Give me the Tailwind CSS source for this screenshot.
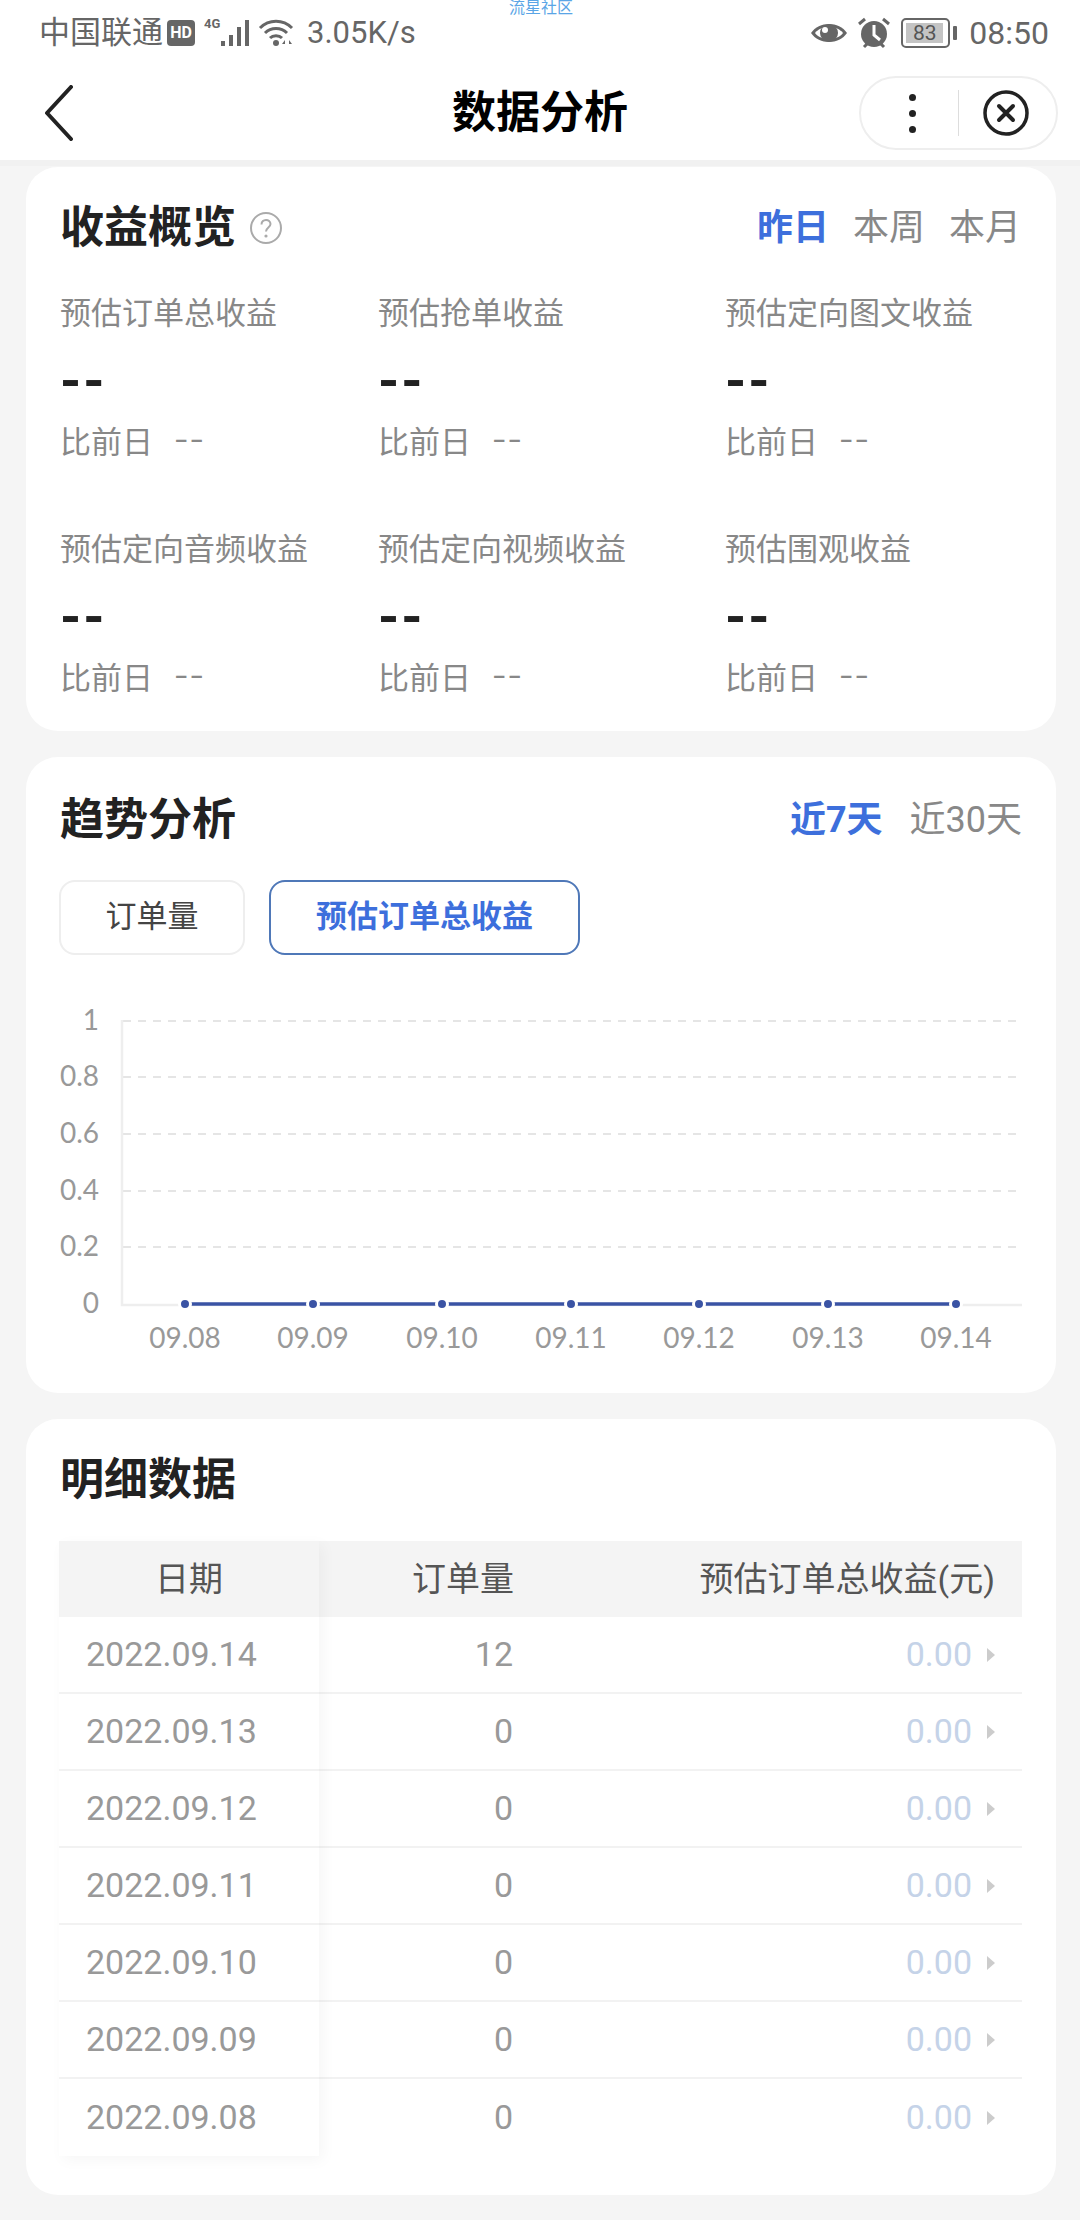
<!DOCTYPE html>
<html lang="zh">
<head>
    <meta charset="utf-8">
    <meta name="viewport" content="width=device-width, initial-scale=1.0">
    <title>数据分析</title>
    <script src="https://cdn.jsdelivr.net/npm/@tailwindcss/browser@4"></script>
</head>
<body class="font-['Roboto','Noto_Sans_CJK_SC',sans-serif] bg-[#f5f5f5] text-[#222222] w-[1080px] h-[2220px] overflow-hidden relative">

<!-- watermark -->
<div class="absolute left-[509px] top-[-1px] text-[16px] leading-[18px] text-[#5aa5e6]">流星社区</div>

<header class="bg-white border-b-[6px] border-[#f1f1f1]">
    <!-- status bar -->
    <div class="h-[66px] flex items-center justify-between pl-[39px] pr-[31px] text-[#666666]">
        <div class="flex items-center">
            <span class="text-[31px] leading-[40px]">中国联通</span>
            <span class="ml-[4px] w-[28px] h-[26px] rounded-[4px] bg-[#666666] text-white text-[16px] font-bold leading-[26px] text-center">HD</span>
            <svg class="ml-[9px]" width="48" height="32" viewBox="0 0 48 32">
                <text x="0" y="11" font-size="13" font-weight="700" fill="#666666">4G</text>
                <rect x="17" y="24" width="4" height="5" fill="#666666"/>
                <rect x="25" y="18" width="4" height="11" fill="#666666"/>
                <rect x="33" y="10" width="4" height="19" fill="#666666"/>
                <rect x="41" y="3" width="4" height="26" fill="#666666"/>
            </svg>
            <svg class="ml-[6px]" width="38" height="30" viewBox="0 0 38 30" fill="none" stroke="#666666" stroke-width="3">
                <path d="M2 10C11 1 25 1 34 10"/>
                <path d="M7 15C13 9 23 9 29 15"/>
                <path d="M12 20C15 17 21 17 24 20"/>
                <circle cx="18" cy="25" r="3" fill="#666666" stroke="none"/>
                <path d="M27 22l-3 4h3zM31 22l3 4h-3z" fill="#666666" stroke="none"/>
            </svg>
            <span class="ml-[11px] text-[31px] leading-[40px]">3.05K/s</span>
        </div>
        <div class="flex items-center">
            <svg width="38" height="26" viewBox="0 0 38 26">
                <path d="M1 13C9 1 29 1 37 13C29 25 9 25 1 13Z" fill="#666666"/>
                <path d="M5 13C11 5 27 5 33 13C27 21 11 21 5 13Z" fill="#ffffff"/>
                <circle cx="19" cy="13" r="9" fill="#666666"/>
                <circle cx="15" cy="10" r="3" fill="#ffffff"/>
            </svg>
            <svg class="ml-[8px]" width="36" height="34" viewBox="0 0 36 34">
                <circle cx="18" cy="18" r="13" fill="#666666"/>
                <path d="M18 9v10l6 5" fill="none" stroke="#ffffff" stroke-width="3"/>
                <path d="M3 8l6-5M33 8l-6-5M8 31l3-3M28 31l-3-3" stroke="#666666" stroke-width="3"/>
            </svg>
            <div class="ml-[9px] w-[49px] h-[30px] rounded-[5px] border-[2px] border-[#666666] p-[3px] flex">
                <span class="w-[37px] h-full bg-[#c4c4c4] text-[21px] leading-[20px] text-center text-[#555555]">83</span>
            </div>
            <span class="ml-[3px] w-[4px] h-[14px] bg-[#666666] rounded-[1px]"></span>
            <span class="ml-[12px] text-[32px] leading-[40px]">08:50</span>
        </div>
    </div>
    <!-- nav bar -->
    <div class="h-[94px] relative flex items-center justify-between pl-[44px] pr-[22px]">
        <svg width="30" height="56" viewBox="0 0 30 56" fill="none" stroke="#222222" stroke-width="4" stroke-linecap="round" stroke-linejoin="round">
            <path d="M27 2L3 28L27 54"/>
        </svg>
        <h1 class="absolute left-0 right-0 text-center text-[44px] leading-[60px] font-bold text-black">数据分析</h1>
        <div class="w-[199px] h-[74px] rounded-full border-[2px] border-[#eeeeee] flex items-center relative z-10">
            <div class="ml-[48px] w-[7px] flex flex-col items-center gap-[9px]">
                <span class="w-[7px] h-[7px] rounded-full bg-[#222222]"></span>
                <span class="w-[7px] h-[7px] rounded-full bg-[#222222]"></span>
                <span class="w-[7px] h-[7px] rounded-full bg-[#222222]"></span>
            </div>
            <span class="ml-[42px] w-[1px] h-[46px] bg-[#dddddd]"></span>
            <svg class="ml-[24px]" width="46" height="46" viewBox="0 0 46 46" fill="none" stroke="#222222">
                <circle cx="23" cy="23" r="21" stroke-width="3.5"/>
                <path d="M16 16L30 30M30 16L16 30" stroke-width="4" stroke-linecap="round"/>
            </svg>
        </div>
    </div>
</header>

<main class="mt-[1px] ml-[26px] mr-[24px] flex flex-col gap-[26px]">

    <!-- 收益概览 -->
    <section class="bg-white rounded-[32px] h-[564px]">
        <div class="h-[122px] flex items-center justify-between pl-[34px] pr-[35px]">
            <div class="flex items-center">
                <h2 class="text-[44px] leading-[60px] font-bold">收益概览</h2>
                <svg class="ml-[14px]" width="32" height="32" viewBox="0 0 32 32" fill="none" stroke="#aaaaaa" stroke-width="2">
                    <circle cx="16" cy="16" r="15"/>
                    <path d="M11.5 12.5C11.5 6.5 20.5 6.5 20.5 12C20.5 15.5 16 15.5 16 19.5"/>
                    <circle cx="16" cy="24" r="1.6" fill="#aaaaaa" stroke="none"/>
                </svg>
            </div>
            <div class="flex items-center gap-[24px] text-[36px] leading-[50px] text-[#888888]">
                <span class="font-bold text-[#3d6fdc]">昨日</span>
                <span>本周</span>
                <span>本月</span>
            </div>
        </div>
        <div class="mt-[3px] pl-[34px] grid grid-cols-[318px_347px_1fr] gap-y-[62px]">
            <div>
                <p class="text-[31px] leading-[44px] text-[#888888]">预估订单总收益</p>
                <p class="text-[54px] leading-[79px] pt-[5px] font-bold tracking-[2px]">--</p>
                <p class="h-[46px] flex items-center text-[31px] text-[#888888]">比前日<span class="ml-[22px] mb-[6px] text-[44px] leading-[46px] font-light tracking-[3px]">--</span></p>
            </div>
            <div>
                <p class="text-[31px] leading-[44px] text-[#888888]">预估抢单收益</p>
                <p class="text-[54px] leading-[79px] pt-[5px] font-bold tracking-[2px]">--</p>
                <p class="h-[46px] flex items-center text-[31px] text-[#888888]">比前日<span class="ml-[22px] mb-[6px] text-[44px] leading-[46px] font-light tracking-[3px]">--</span></p>
            </div>
            <div>
                <p class="text-[31px] leading-[44px] text-[#888888]">预估定向图文收益</p>
                <p class="text-[54px] leading-[79px] pt-[5px] font-bold tracking-[2px]">--</p>
                <p class="h-[46px] flex items-center text-[31px] text-[#888888]">比前日<span class="ml-[22px] mb-[6px] text-[44px] leading-[46px] font-light tracking-[3px]">--</span></p>
            </div>
            <div>
                <p class="text-[31px] leading-[44px] text-[#888888]">预估定向音频收益</p>
                <p class="text-[54px] leading-[79px] pt-[5px] font-bold tracking-[2px]">--</p>
                <p class="h-[46px] flex items-center text-[31px] text-[#888888]">比前日<span class="ml-[22px] mb-[6px] text-[44px] leading-[46px] font-light tracking-[3px]">--</span></p>
            </div>
            <div>
                <p class="text-[31px] leading-[44px] text-[#888888]">预估定向视频收益</p>
                <p class="text-[54px] leading-[79px] pt-[5px] font-bold tracking-[2px]">--</p>
                <p class="h-[46px] flex items-center text-[31px] text-[#888888]">比前日<span class="ml-[22px] mb-[6px] text-[44px] leading-[46px] font-light tracking-[3px]">--</span></p>
            </div>
            <div>
                <p class="text-[31px] leading-[44px] text-[#888888]">预估围观收益</p>
                <p class="text-[54px] leading-[79px] pt-[5px] font-bold tracking-[2px]">--</p>
                <p class="h-[46px] flex items-center text-[31px] text-[#888888]">比前日<span class="ml-[22px] mb-[6px] text-[44px] leading-[46px] font-light tracking-[3px]">--</span></p>
            </div>
        </div>
    </section>

    <!-- 趋势分析 -->
    <section class="bg-white rounded-[32px] h-[636px]">
        <div class="h-[126px] flex items-center justify-between pl-[34px] pr-[34px]">
            <h2 class="text-[44px] leading-[60px] font-bold">趋势分析</h2>
            <div class="flex items-center gap-[27px] text-[36px] leading-[50px] text-[#888888]">
                <span class="font-bold text-[#3d6fdc]">近7天</span>
                <span>近30天</span>
            </div>
        </div>
        <div class="pl-[33px] flex gap-[24px] -mt-[3px]">
            <button class="w-[186px] h-[75px] rounded-[16px] border-[2px] border-[#eeeeee] text-[31px] text-[#444444]">订单量</button>
            <button class="w-[311px] h-[75px] rounded-[16px] border-[2px] border-[#4f78b8] text-[31px] font-bold text-[#3d6fdc]">预估订单总收益</button>
        </div>
        <svg class="mt-[45px] font-['Lato',sans-serif]" width="1030" height="360" viewBox="26 1000 1030 360">
            <g stroke="#dddddd" stroke-width="1.5" stroke-dasharray="8 7">
                <line x1="123" y1="1021" x2="1020" y2="1021"/>
                <line x1="123" y1="1077" x2="1020" y2="1077"/>
                <line x1="123" y1="1134" x2="1020" y2="1134"/>
                <line x1="123" y1="1191" x2="1020" y2="1191"/>
                <line x1="123" y1="1247" x2="1020" y2="1247"/>
            </g>
            <path d="M122 1020V1305H1022" fill="none" stroke="#eeeeee" stroke-width="2.5"/>
            <g font-size="28" fill="#999999" text-anchor="end">
                <text x="99" y="1030">1</text>
                <text x="99" y="1086">0.8</text>
                <text x="99" y="1143">0.6</text>
                <text x="99" y="1200">0.4</text>
                <text x="99" y="1256">0.2</text>
                <text x="99" y="1313">0</text>
            </g>
            <line x1="185" y1="1304" x2="956" y2="1304" stroke="#3a53a4" stroke-width="3.5"/>
            <g fill="#3a53a4" stroke="#ffffff" stroke-width="3">
                <circle cx="185" cy="1304" r="5.5"/>
                <circle cx="313" cy="1304" r="5.5"/>
                <circle cx="442" cy="1304" r="5.5"/>
                <circle cx="571" cy="1304" r="5.5"/>
                <circle cx="699" cy="1304" r="5.5"/>
                <circle cx="828" cy="1304" r="5.5"/>
                <circle cx="956" cy="1304" r="5.5"/>
            </g>
            <g font-size="28" fill="#999999" text-anchor="middle">
                <text x="185" y="1348">09.08</text>
                <text x="313" y="1348">09.09</text>
                <text x="442" y="1348">09.10</text>
                <text x="571" y="1348">09.11</text>
                <text x="699" y="1348">09.12</text>
                <text x="828" y="1348">09.13</text>
                <text x="956" y="1348">09.14</text>
            </g>
        </svg>
    </section>

    <!-- 明细数据 -->
    <section class="bg-white rounded-[32px] h-[776px]">
        <div class="h-[122px] flex items-center pl-[34px]">
            <h2 class="text-[44px] leading-[60px] font-bold">明细数据</h2>
        </div>
        <div class="ml-[33px] mr-[34px] flex text-[34px]">
            <div class="w-[260px] relative z-10 shadow-[4px_4px_14px_rgba(0,0,0,0.04)] text-[#999999]">
                <div class="h-[76px] bg-[#f4f4f4] text-[#555555] flex items-center justify-center">日期</div>
                <div class="h-[77px] border-b-[2px] border-[#f2f2f2] flex items-center pl-[27px]">2022.09.14</div>
                <div class="h-[77px] border-b-[2px] border-[#f2f2f2] flex items-center pl-[27px]">2022.09.13</div>
                <div class="h-[77px] border-b-[2px] border-[#f2f2f2] flex items-center pl-[27px]">2022.09.12</div>
                <div class="h-[77px] border-b-[2px] border-[#f2f2f2] flex items-center pl-[27px]">2022.09.11</div>
                <div class="h-[77px] border-b-[2px] border-[#f2f2f2] flex items-center pl-[27px]">2022.09.10</div>
                <div class="h-[77px] border-b-[2px] border-[#f2f2f2] flex items-center pl-[27px]">2022.09.09</div>
                <div class="h-[77px] flex items-center pl-[27px]">2022.09.08</div>
            </div>
            <div class="flex-1">
                <div class="h-[76px] bg-[#f4f4f4] text-[#555555] flex items-center justify-between pl-[93px] pr-[27px]">
                    <span>订单量</span><span>预估订单总收益(元)</span>
                </div>
                <div class="h-[77px] border-b-[2px] border-[#f2f2f2] flex items-center pr-[27px]"><span class="w-[194px] text-right text-[#999999]">12</span><span class="ml-auto text-[#c5d3e8]">0.00</span><span class="ml-[15px] w-0 h-0 border-y-[7px] border-y-transparent border-l-[8px] border-l-[#cccccc]"></span></div>
                <div class="h-[77px] border-b-[2px] border-[#f2f2f2] flex items-center pr-[27px]"><span class="w-[194px] text-right text-[#999999]">0</span><span class="ml-auto text-[#c5d3e8]">0.00</span><span class="ml-[15px] w-0 h-0 border-y-[7px] border-y-transparent border-l-[8px] border-l-[#cccccc]"></span></div>
                <div class="h-[77px] border-b-[2px] border-[#f2f2f2] flex items-center pr-[27px]"><span class="w-[194px] text-right text-[#999999]">0</span><span class="ml-auto text-[#c5d3e8]">0.00</span><span class="ml-[15px] w-0 h-0 border-y-[7px] border-y-transparent border-l-[8px] border-l-[#cccccc]"></span></div>
                <div class="h-[77px] border-b-[2px] border-[#f2f2f2] flex items-center pr-[27px]"><span class="w-[194px] text-right text-[#999999]">0</span><span class="ml-auto text-[#c5d3e8]">0.00</span><span class="ml-[15px] w-0 h-0 border-y-[7px] border-y-transparent border-l-[8px] border-l-[#cccccc]"></span></div>
                <div class="h-[77px] border-b-[2px] border-[#f2f2f2] flex items-center pr-[27px]"><span class="w-[194px] text-right text-[#999999]">0</span><span class="ml-auto text-[#c5d3e8]">0.00</span><span class="ml-[15px] w-0 h-0 border-y-[7px] border-y-transparent border-l-[8px] border-l-[#cccccc]"></span></div>
                <div class="h-[77px] border-b-[2px] border-[#f2f2f2] flex items-center pr-[27px]"><span class="w-[194px] text-right text-[#999999]">0</span><span class="ml-auto text-[#c5d3e8]">0.00</span><span class="ml-[15px] w-0 h-0 border-y-[7px] border-y-transparent border-l-[8px] border-l-[#cccccc]"></span></div>
                <div class="h-[77px] flex items-center pr-[27px]"><span class="w-[194px] text-right text-[#999999]">0</span><span class="ml-auto text-[#c5d3e8]">0.00</span><span class="ml-[15px] w-0 h-0 border-y-[7px] border-y-transparent border-l-[8px] border-l-[#cccccc]"></span></div>
            </div>
        </div>
    </section>
</main>

</body>
</html>
